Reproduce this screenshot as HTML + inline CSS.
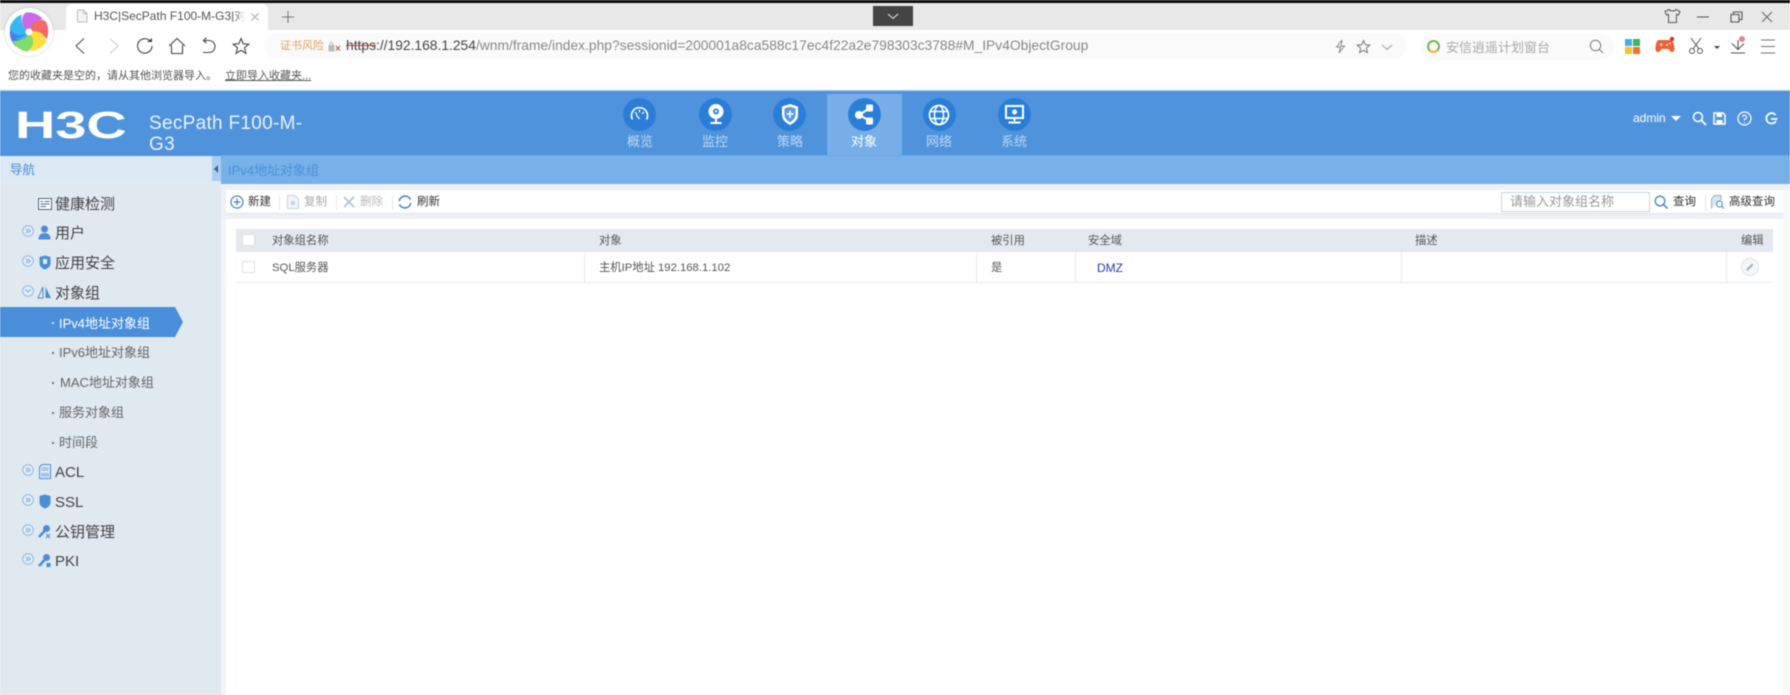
<!DOCTYPE html>
<html lang="zh"><head><meta charset="utf-8"><title>H3C|SecPath F100-M-G3</title>
<style>
*{box-sizing:border-box;margin:0;padding:0}
html,body{width:1790px;height:695px;overflow:hidden;background:#fff}
body{position:relative;font-family:"Liberation Sans","Noto Sans CJK SC",sans-serif;color:#444}
#root{position:absolute;left:0;top:0;width:1790px;height:695px;filter:blur(.45px)}
.a{position:absolute}
.t{position:absolute;white-space:nowrap;line-height:1}
svg{position:absolute;overflow:visible;fill:none}
.nc{position:absolute;top:98px;width:33px;height:33px;border-radius:50%;background:#2b7ed8}
.nl{position:absolute;top:135px;width:60px;text-align:center;font-size:13px;line-height:14px;color:#bcd6f3;white-space:nowrap}
.si{position:absolute;left:55px;font-size:15px;line-height:18px;color:#444;white-space:nowrap}
.sub{position:absolute;left:59px;font-size:13px;line-height:16px;color:#666;white-space:nowrap}
.dot{position:absolute;left:52px;width:2px;height:2px;background:#777}
.th,.td{position:absolute;font-size:11.3px;line-height:14px;color:#555;white-space:nowrap}
.vs{position:absolute;top:252px;height:30px;width:1px;background:#e6eaee}
.tb{position:absolute;top:196px;font-size:11.5px;line-height:13px;color:#333;white-space:nowrap}
.sp{position:absolute;top:195px;width:1px;height:15px;background:#e4e9ee}
.cb{position:absolute;left:242px;width:13px;height:12px;background:#fff;border:1px solid #dde1e5}
</style></head><body><div id="root">

<!-- browser chrome -->
<div class="a" style="left:0;top:0;width:1790px;height:3px;background:#0b0b0b"></div>
<div class="a" style="left:0;top:3px;width:1790px;height:27px;background:#e8e8e8"></div>
<div class="a" style="left:66px;top:4px;width:202px;height:27px;background:#fff;border-radius:6px 6px 0 0"></div>
<svg style="left:76px;top:9px" width="12" height="14"><path d="M1.500 1H7.500L11 4.500V13H1.500ZM7.500 1V4.500H11" stroke="#bbb" fill="#f4f4f4"/></svg>
<div class="t" style="left:94px;top:10px;width:150px;overflow:hidden;font-size:12px;color:#555">H3C|SecPath F100-M-G3|对象</div>
<div class="a" style="left:234px;top:8px;width:12px;height:16px;background:linear-gradient(90deg,rgba(255,255,255,0),#fff)"></div>
<svg style="left:250px;top:12px" width="10" height="10"><path d="M1.500 1.500L8.500 8.500M8.500 1.500L1.500 8.500" stroke="#aaa" stroke-width="1"/></svg>
<svg style="left:281px;top:10px" width="14" height="14"><path d="M7 1V13M1 7H13" stroke="#777" stroke-width="1"/></svg>
<div class="a" style="left:873px;top:6px;width:40px;height:20px;background:#444"></div>
<svg style="left:887px;top:13px" width="12" height="7"><path d="M1 1L6 5.500L11 1" stroke="#eee" stroke-width="1"/></svg>
<svg style="left:1664px;top:8px" width="17" height="16"><path d="M5 1.500L1 3.500L2.500 7L4.500 6.300V14.500H12.500V6.300L14.500 7L16 3.500L12 1.500C11 3.500 6 3.500 5 1.500Z" stroke="#555" stroke-width="1"/></svg>
<svg style="left:1697px;top:16px" width="12" height="2"><path d="M0 1H12" stroke="#555" stroke-width="1"/></svg>
<svg style="left:1730px;top:11px" width="13" height="12"><path d="M1 3.500H9V11H1ZM3.500 3.500V1H12V8.500H9" stroke="#555" stroke-width="1.100"/></svg>
<svg style="left:1761px;top:11px" width="12" height="12"><path d="M1 1L11 11M11 1L1 11" stroke="#666" stroke-width="1"/></svg>

<!-- logo -->
<div class="a" style="left:5px;top:8px;width:48px;height:48px;border-radius:50%;background:#fff;box-shadow:0 0 3px rgba(0,0,0,.18)"></div>
<svg style="left:10px;top:13px" width="38" height="38" viewBox="-19 -19 38 38">
<circle r="18.500" fill="#f3d9ef"/>
<path transform="rotate(-150)" d="M0 0C-4 -7 -4 -15 5 -19A19 19 0 0 1 18 -6C10 -8 4 -5 0 0Z" fill="#4a7ff0"/>
<path transform="rotate(-95)" d="M0 0C-4 -7 -4 -15 5 -19A19 19 0 0 1 18 -6C10 -8 4 -5 0 0Z" fill="#38b6f0"/>
<path transform="rotate(-25)" d="M0 0C-4 -7 -4 -15 5 -19A19 19 0 0 1 18 -6C10 -8 4 -5 0 0Z" fill="#c76ae8"/>
<path transform="rotate(40)" d="M0 0C-4 -7 -4 -15 5 -19A19 19 0 0 1 18 -6C10 -8 4 -5 0 0Z" fill="#f4686a"/>
<path transform="rotate(105)" d="M0 0C-4 -7 -4 -15 5 -19A19 19 0 0 1 18 -6C10 -8 4 -5 0 0Z" fill="#ffdf3b"/>
<path transform="rotate(170)" d="M0 0C-4 -7 -4 -15 5 -19A19 19 0 0 1 18 -6C10 -8 4 -5 0 0Z" fill="#7fdc6a"/>
<path transform="rotate(235)" d="M0 0C-4 -6 -3 -11 2 -15C0 -9 -1 -4 0 0Z" fill="#38b6f0"/>
<circle r="3.500" fill="#fff"/>
</svg>

<!-- toolbar -->
<svg style="left:74px;top:37px" width="12" height="18"><path d="M10 1.500L2 9L10 16.500" stroke="#555" stroke-width="1.100"/></svg>
<svg style="left:108px;top:37px" width="12" height="18"><path d="M2 1.500L10 9L2 16.500" stroke="#ccc" stroke-width="1.100"/></svg>
<svg style="left:136px;top:37px" width="18" height="18"><path d="M14.500 4.500A7.200 7.200 0 1 0 16 9" stroke="#444" stroke-width="1.100"/><path d="M11 5H16V1Z" fill="#444"/></svg>
<svg style="left:168px;top:37px" width="18" height="18"><path d="M1 9L9 1.500L17 9M3.500 8V16.500H14.500V8" stroke="#444" stroke-width="1.100"/></svg>
<svg style="left:201px;top:37px" width="15" height="18"><path d="M3 3.500H8A6 6 0 0 1 8 15.500H2" stroke="#444" stroke-width="1.100"/><path d="M5.500 .8L2.500 3.500L5.500 6.200" stroke="#444" stroke-width="1.100"/></svg>
<svg style="left:232px;top:37px" width="18" height="18"><path d="M9 1.500L11.200 6.800L16.800 7.200L12.500 10.800L13.900 16.300L9 13.300L4.100 16.300L5.500 10.800L1.200 7.200L6.800 6.800Z" stroke="#444" stroke-width="1.100"/></svg>

<div class="a" style="left:264px;top:33px;width:1143px;height:26px;background:#fafafa;border-radius:13px"></div>
<div class="t" style="left:280px;top:41px;font-size:11px;color:#e0a55c">证书风险</div>
<svg style="left:328px;top:41px" width="13" height="12"><rect x="0.500" y="4" width="6" height="6.500" fill="#bbb"/><path d="M2 4V2.500A1.600 1.600 0 0 1 5 2.500V4" stroke="#bbb"/><path d="M8 5L12 9.500M12 5L8 9.500" stroke="#a55" stroke-width="1"/></svg>
<div class="t" style="left:346px;top:39px;font-size:13.83px;color:#888"><span style="color:#444;text-decoration:line-through;text-decoration-color:#c33">https</span><span style="color:#444">://192.168.1.254</span>/wnm/frame/index.php?sessionid=200001a8ca588c17ec4f22a2e798303c3788#M_IPv4ObjectGroup</div>
<svg style="left:1335px;top:39px" width="11" height="15"><path d="M7 1L1.500 8H5.500L4 14L9.500 7H6Z" stroke="#888"/></svg>
<svg style="left:1356px;top:39px" width="15" height="15"><path d="M7.500 1.500L9.300 5.800L13.800 6.200L10.400 9.100L11.400 13.600L7.500 11.200L3.600 13.600L4.600 9.100L1.200 6.200L5.700 5.800Z" stroke="#777"/></svg>
<svg style="left:1381px;top:44px" width="12" height="7"><path d="M1 1L6 5.500L11 1" stroke="#999"/></svg>

<div class="a" style="left:1420px;top:34px;width:194px;height:26px;background:#fafafa;border-radius:13px"></div>
<div class="a" style="left:1427px;top:40px;width:13px;height:13px;border-radius:50%;border:2.500px solid #6fbb3f;border-bottom-color:#f2b134"></div>
<div class="t" style="left:1446px;top:41px;font-size:13px;color:#aaa">安信逍遥计划窗台</div>
<svg style="left:1589px;top:39px" width="15" height="15"><circle cx="6.500" cy="6.500" r="5.200" stroke="#777" stroke-width="1"/><path d="M10.300 10.300L14 14" stroke="#777" stroke-width="1"/></svg>
<div class="a" style="left:1625px;top:39px;width:7px;height:7px;background:#3fb0e8"></div>
<div class="a" style="left:1633px;top:39px;width:7px;height:7px;background:#3bb56c"></div>
<div class="a" style="left:1625px;top:47px;width:7px;height:7px;background:#f7c22e"></div>
<div class="a" style="left:1633px;top:47px;width:7px;height:7px;background:#f0762e"></div>
<svg style="left:1655px;top:37px" width="20" height="16"><path d="M4 3H15C18 3 19.500 8 19.500 12C19.500 15.500 16 16 14.500 13.500L13.500 12H6.500L5.500 13.500C4 16 .5 15.500 .5 12C.5 8 1.500 3 4 3Z" fill="#ec6236"/><path d="M4.500 7.500H8M6.200 5.700V9.300" stroke="#ffd9c9"/><circle cx="12" cy="8" r="1" fill="#ffd9c9"/><circle cx="15" cy="6.500" r="1" fill="#ffd9c9"/><circle cx="17" cy="2" r="2.200" fill="#d5303a"/></svg>
<svg style="left:1688px;top:37px" width="16" height="18"><path d="M3 1L11 12M13 1L5 12" stroke="#555" stroke-width="1"/><circle cx="4" cy="14" r="2.500" stroke="#555"/><circle cx="12" cy="14" r="2.500" stroke="#555"/></svg>
<div class="a" style="left:1714px;top:46px;border:3px solid transparent;border-top:3px solid #444"></div>
<svg style="left:1729px;top:35px" width="18" height="19"><path d="M9 5V14M3 8.500L9 14.500L15 8.500M2 18H16" stroke="#555" stroke-width="1.100"/><circle cx="13" cy="4" r="3" fill="#e8808a"/></svg>
<svg style="left:1761px;top:39px" width="14" height="15"><path d="M0 1H14M0 7.500H14M0 14H14" stroke="#777" stroke-width="1"/></svg>

<!-- bookmarks -->
<div class="t" style="left:8px;top:71px;font-size:11px;color:#555">您的收藏夹是空的，请从其他浏览器导入。</div>
<div class="t" style="left:225px;top:71px;font-size:11px;color:#555;text-decoration:underline">立即导入收藏夹...</div>

<!-- header -->
<div class="a" style="left:0;top:90px;width:1790px;height:66px;background:#5093dd;border-top:1px solid #a9c9e8"></div>
<div class="t" style="left:15px;top:107px;font-weight:700;font-size:38px;color:#fff;transform:scaleX(1.47);transform-origin:0 0">H3C</div>
<div class="t" style="left:149px;top:113px;font-size:19px;line-height:21px;color:#e8f1fb;letter-spacing:.3px">SecPath F100-M-<br>G3</div>

<div class="a" style="left:827px;top:94px;width:75px;height:62px;background:#78aee8"></div>
<div class="nc" style="left:623px"></div><div class="nc" style="left:699px"></div><div class="nc" style="left:773px"></div><div class="nc" style="left:848px"></div><div class="nc" style="left:923px"></div><div class="nc" style="left:998px"></div>
<svg style="left:630px;top:106px" width="19" height="16"><path d="M2.500 13.500A8 8 0 1 1 16.500 13.500" stroke="#fff" stroke-width="1.600"/><path d="M5 6L7 8M9.500 3.500V6.500M14 6L12 8M9.500 13L6 8.500" stroke="#fff" stroke-width="1.200"/></svg>
<svg style="left:706px;top:103px" width="20" height="23"><circle cx="10" cy="8.500" r="7.500" fill="#fff"/><circle cx="10" cy="8.500" r="3" fill="#2b7ed8"/><circle cx="10" cy="8.500" r="1.200" fill="#fff"/><path d="M10 16V19M4.500 20H15.500" stroke="#fff" stroke-width="2"/></svg>
<svg style="left:781px;top:103px" width="18" height="23"><path d="M9 1L17 3.500V12C17 17 13 20 9 22C5 20 1 17 1 12V3.500Z" fill="#fff"/><path d="M3.500 5.500L9 3.800L14.500 5.500V12C14.500 15.500 11.500 17.800 9 19.200C6.500 17.800 3.500 15.500 3.500 12Z" fill="#5c9ae0"/><path d="M9 7.500V15M5.500 11H12.500" stroke="#fff" stroke-width="1.500"/></svg>
<svg style="left:854px;top:103px" width="21" height="23"><path d="M5 12L16 5M5 12L16 18" stroke="#fff" stroke-width="2"/><circle cx="5" cy="12" r="4" fill="#fff"/><rect x="12" y="1.500" width="7" height="7" rx="1.500" fill="#fff"/><rect x="12" y="14.500" width="7" height="7" rx="1.500" fill="#fff"/></svg>
<svg style="left:928px;top:104px" width="22" height="22"><circle cx="11" cy="11" r="9.500" stroke="#fff" stroke-width="1.700"/><ellipse cx="11" cy="11" rx="4.500" ry="9.500" stroke="#fff" stroke-width="1.500"/><path d="M2.500 7.500H19.500M2.500 14.500H19.500" stroke="#fff" stroke-width="1.500"/></svg>
<svg style="left:1005px;top:105px" width="19" height="19"><rect x="1" y="1" width="17" height="12" stroke="#fff" stroke-width="2"/><circle cx="9.500" cy="7" r="2.500" fill="#fff"/><path d="M9.500 13V16M3.500 17.500H15.500" stroke="#fff" stroke-width="2"/></svg>
<div class="nl" style="left:610px">概览</div><div class="nl" style="left:685px">监控</div><div class="nl" style="left:760px">策略</div><div class="nl" style="left:834px;color:#fff">对象</div><div class="nl" style="left:909px">网络</div><div class="nl" style="left:984px">系统</div>

<div class="t" style="left:1633px;top:112px;font-size:12px;color:#fff">admin</div>
<div class="a" style="left:1671px;top:116px;border:5px solid transparent;border-top:5px solid #fff;border-bottom:0"></div>
<svg style="left:1692px;top:111px" width="15" height="15"><circle cx="6" cy="6" r="4.500" stroke="#fff" stroke-width="1.500"/><path d="M9.500 9.500L14 14" stroke="#fff" stroke-width="1.800"/></svg>
<svg style="left:1713px;top:112px" width="13" height="13"><path d="M1 1H10L12 3V12H1Z" stroke="#fff" stroke-width="1.500"/><path d="M3.500 1.500H9V5H3.500ZM3.500 8H9.500V12H3.500Z" fill="#fff"/></svg>
<svg style="left:1737px;top:111px" width="15" height="15"><circle cx="7.500" cy="7.500" r="6.500" stroke="#fff" stroke-width="1.200"/><path d="M5.500 6A2 2 0 1 1 7.500 8.200V9.500M7.500 11V12" stroke="#fff" stroke-width="1.200"/></svg>
<svg style="left:1764px;top:112px" width="14" height="13"><path d="M11.500 3A5.200 5.200 0 1 0 12 9" stroke="#fff" stroke-width="1.700"/><path d="M7 7H13.500" stroke="#fff" stroke-width="1.700"/></svg>

<!-- sidebar -->
<div class="a" style="left:0;top:156px;width:221px;height:539px;background:#e0e8f0"></div>
<div class="a" style="left:0;top:156px;width:212px;height:25px;background:#dce8f4"></div>
<div class="t" style="left:10px;top:164px;font-size:12.500px;color:#4a8fd6">导航</div>
<div class="a" style="left:212px;top:156px;width:9px;height:25px;background:#a9cdf1"></div>
<div class="a" style="left:214px;top:165px;border:4px solid transparent;border-right:4px solid #3a5f88;border-left:0"></div>
<div class="a" style="left:221px;top:181px;width:5px;height:514px;background:#f2f5f9"></div>

<svg style="left:38px;top:198px" width="14" height="12"><rect x=".5" y=".5" width="13" height="11" fill="#fff" stroke="#4c6a85"/><path d="M2.500 3.500H5M6.500 3.500H11.500M2.500 6H11.500M2.500 8.500H8" stroke="#4c6a85"/></svg>
<div class="si" style="top:196px">健康检测</div>
<div class="si" style="top:225px">用户</div>
<div class="si" style="top:255px">应用安全</div>
<div class="si" style="top:285px">对象组</div>
<div class="si" style="top:464px">ACL</div>
<div class="si" style="top:494px">SSL</div>
<div class="si" style="top:524px">公钥管理</div>
<div class="si" style="top:553px">PKI</div>

<svg style="left:22px;top:225px" width="12" height="12"><circle cx="6" cy="6" r="5.300" fill="#e6eef6" stroke="#8fbbe2"/><path d="M3.800 3.800L6 6L3.800 8.200M6.200 3.800L8.400 6L6.200 8.200" stroke="#6aa3d6" stroke-width=".8"/></svg>
<svg style="left:22px;top:255px" width="12" height="12"><circle cx="6" cy="6" r="5.300" fill="#e6eef6" stroke="#8fbbe2"/><path d="M3.800 3.800L6 6L3.800 8.200M6.200 3.800L8.400 6L6.200 8.200" stroke="#6aa3d6" stroke-width=".8"/></svg>
<svg style="left:22px;top:285px" width="12" height="12"><circle cx="6" cy="6" r="5.300" fill="#e6eef6" stroke="#8fbbe2"/><path d="M3.300 4.500L6 7L8.700 4.500" stroke="#6aa3d6" stroke-width=".9"/></svg>
<svg style="left:22px;top:464px" width="12" height="12"><circle cx="6" cy="6" r="5.300" fill="#e6eef6" stroke="#8fbbe2"/><path d="M3.800 3.800L6 6L3.800 8.200M6.200 3.800L8.400 6L6.200 8.200" stroke="#6aa3d6" stroke-width=".8"/></svg>
<svg style="left:22px;top:494px" width="12" height="12"><circle cx="6" cy="6" r="5.300" fill="#e6eef6" stroke="#8fbbe2"/><path d="M3.800 3.800L6 6L3.800 8.200M6.200 3.800L8.400 6L6.200 8.200" stroke="#6aa3d6" stroke-width=".8"/></svg>
<svg style="left:22px;top:524px" width="12" height="12"><circle cx="6" cy="6" r="5.300" fill="#e6eef6" stroke="#8fbbe2"/><path d="M3.800 3.800L6 6L3.800 8.200M6.200 3.800L8.400 6L6.200 8.200" stroke="#6aa3d6" stroke-width=".8"/></svg>
<svg style="left:22px;top:553px" width="12" height="12"><circle cx="6" cy="6" r="5.300" fill="#e6eef6" stroke="#8fbbe2"/><path d="M3.800 3.800L6 6L3.800 8.200M6.200 3.800L8.400 6L6.200 8.200" stroke="#6aa3d6" stroke-width=".8"/></svg>

<svg style="left:38px;top:225px" width="13" height="15"><circle cx="6.500" cy="4" r="3.500" fill="#4a8fd6"/><path d="M.5 14.500C.5 9.500 3.500 8 6.500 8C9.500 8 12.500 9.500 12.500 14.500Z" fill="#4a8fd6"/></svg>
<svg style="left:39px;top:255px" width="12" height="15"><path d="M6 .5L11.500 2V8C11.500 11.500 9 13.500 6 14.500C3 13.500 .5 11.500 .5 8V2Z" fill="#4a8fd6"/><rect x="4" y="4" width="4" height="5" fill="#e0e8f0"/></svg>
<svg style="left:37px;top:286px" width="15" height="13"><path d="M6 1L1 12H6Z" stroke="#4a8fd6" fill="#e6eef6"/><path d="M8.500 1L14 12H8.500Z" fill="#4a8fd6"/></svg>
<svg style="left:39px;top:464px" width="12" height="15"><path d="M.5 3L3 .5H11.500V14.500H.5Z" stroke="#4a8fd6" fill="#dfe9f4"/><path d="M2.500 4H9.500M2.500 6H9.500" stroke="#7caedd"/><path d="M2 9H10V12.500H2Z" fill="#9cc2e8"/></svg>
<svg style="left:39px;top:494px" width="12" height="15"><path d="M6 .5L11.500 2V8C11.500 11.500 9 13.500 6 14.500C3 13.500 .5 11.500 .5 8V2Z" fill="#4a8fd6"/></svg>
<svg style="left:38px;top:524px" width="13" height="15"><circle cx="8.500" cy="4.500" r="3.500" fill="#4a8fd6"/><path d="M6.500 7L1 13" stroke="#4a8fd6" stroke-width="2.500"/><path d="M8 10L12 14M12 10L8 14" stroke="#4a8fd6" stroke-width="1.200"/></svg>
<svg style="left:38px;top:553px" width="13" height="15"><circle cx="8.500" cy="4.500" r="3.500" fill="#4a8fd6"/><path d="M6.500 7L1 13" stroke="#4a8fd6" stroke-width="2.500"/><rect x="8.500" y="10" width="4" height="4" fill="#4a8fd6"/></svg>

<svg style="left:0;top:307px" width="184" height="30"><path d="M0 0H175L183 15L175 30H0Z" fill="#4a8fdb"/></svg>
<div class="dot" style="top:322px;background:#cfe2f6"></div>
<div class="sub" style="top:316px;color:#fff">IPv4地址对象组</div>
<div class="dot" style="top:352px"></div><div class="sub" style="top:345px">IPv6地址对象组</div>
<div class="dot" style="top:382px"></div><div class="sub" style="left:60px;top:375px">MAC地址对象组</div>
<div class="dot" style="top:412px"></div><div class="sub" style="top:405px">服务对象组</div>
<div class="dot" style="top:442px"></div><div class="sub" style="top:435px">时间段</div>

<!-- content -->
<div class="a" style="left:221px;top:155px;width:1569px;height:29px;background:#78b0e8;border-top:1px solid #6ba6e8"></div>
<div class="t" style="left:228px;top:164px;font-size:13px;color:#4a90dc">IPv4地址对象组</div>
<div class="a" style="left:221px;top:184px;width:1569px;height:35px;background:#edf1f6"></div>
<div class="a" style="left:226px;top:190px;width:1557px;height:24px;background:#fff;border-bottom:1px solid #dde3e9"></div>
<div class="a" style="left:1783px;top:190px;width:7px;height:505px;background:#f7f9fb"></div>

<svg style="left:230px;top:195px" width="14" height="14"><circle cx="7" cy="7" r="6" stroke="#4a7fb5" stroke-width="1.200"/><path d="M7 3.500V10.500M3.500 7H10.500" stroke="#4a7fb5" stroke-width="1.200"/></svg>
<div class="tb" style="left:248px">新建</div><div class="sp" style="left:279px"></div>
<svg style="left:287px;top:195px" width="12" height="14"><path d="M.5 .5H8L11.500 4V13.500H.5Z" stroke="#c5d3e0" fill="#f3f6f9"/><rect x="4" y="6" width="4" height="4" fill="#c5d3e0"/></svg>
<div class="tb" style="left:304px;color:#aaa">复制</div><div class="sp" style="left:336px"></div>
<svg style="left:343px;top:196px" width="12" height="12"><path d="M1 1L11 11M11 1L1 11" stroke="#a9c3da" stroke-width="1.600"/></svg>
<div class="tb" style="left:360px;color:#bbb">删除</div><div class="sp" style="left:392px"></div>
<svg style="left:398px;top:195px" width="14" height="14"><path d="M1.200 6A6 6 0 0 1 12.500 4.500" stroke="#4a85c0" stroke-width="1.600"/><path d="M12.800 8A6 6 0 0 1 1.500 9.500" stroke="#4a85c0" stroke-width="1.600"/></svg>
<div class="tb" style="left:417px">刷新</div>

<div class="a" style="left:1501px;top:192px;width:149px;height:20px;background:#fff;border:1px solid #c8d6de"></div>
<div class="t" style="left:1510px;top:195px;font-size:13px;color:#999">请输入对象组名称</div>
<svg style="left:1654px;top:195px" width="14" height="14"><circle cx="6" cy="6" r="4.800" stroke="#3d85c6" stroke-width="1.300"/><path d="M9.500 9.500L13.500 13.500" stroke="#3d85c6" stroke-width="1.500"/></svg>
<div class="tb" style="left:1673px">查询</div><div class="sp" style="left:1705px"></div>
<svg style="left:1711px;top:195px" width="14" height="14"><path d="M.5 13.500V4L3.500 .5H10V5" stroke="#8fb3d6" fill="#dbe7f2"/><circle cx="8.500" cy="9" r="3" stroke="#5e98cc" stroke-width="1.200"/><path d="M10.500 11L13 13.500" stroke="#5e98cc" stroke-width="1.200"/></svg>
<div class="tb" style="left:1729px">高级查询</div>

<div class="a" style="left:227px;top:219px;width:1556px;height:476px;background:#fff"></div>
<div class="a" style="left:236px;top:229px;width:1537px;height:23px;background:#e3e9ee"></div>
<div class="a" style="left:236px;top:282px;width:1537px;height:1px;background:#e8ebee"></div>
<div class="vs" style="left:584px"></div><div class="vs" style="left:976px"></div><div class="vs" style="left:1075px"></div><div class="vs" style="left:1401px"></div><div class="vs" style="left:1726px"></div>
<div class="cb" style="top:234px"></div><div class="cb" style="top:261px"></div>
<div class="th" style="left:272px;top:234px">对象组名称</div>
<div class="th" style="left:599px;top:234px">对象</div>
<div class="th" style="left:991px;top:234px">被引用</div>
<div class="th" style="left:1088px;top:234px">安全域</div>
<div class="th" style="left:1415px;top:234px">描述</div>
<div class="th" style="left:1741px;top:234px">编辑</div>
<div class="td" style="left:272px;top:261px">SQL服务器</div>
<div class="td" style="left:599px;top:261px">主机IP地址 192.168.1.102</div>
<div class="td" style="left:991px;top:261px">是</div>
<div class="td" style="left:1097px;top:261px;font-size:12px;color:#2b3bb0">DMZ</div>
<div class="a" style="left:1741px;top:258px;width:18px;height:18px;border-radius:50%;background:#f5f7f9;border:1px solid #dfe4e8"></div>
<svg style="left:1745px;top:262px" width="10" height="10"><path d="M1 9L2 6.500L7 1.500L8.500 3L3.500 8Z" fill="#a5b0c0"/></svg>

</div></body></html>
